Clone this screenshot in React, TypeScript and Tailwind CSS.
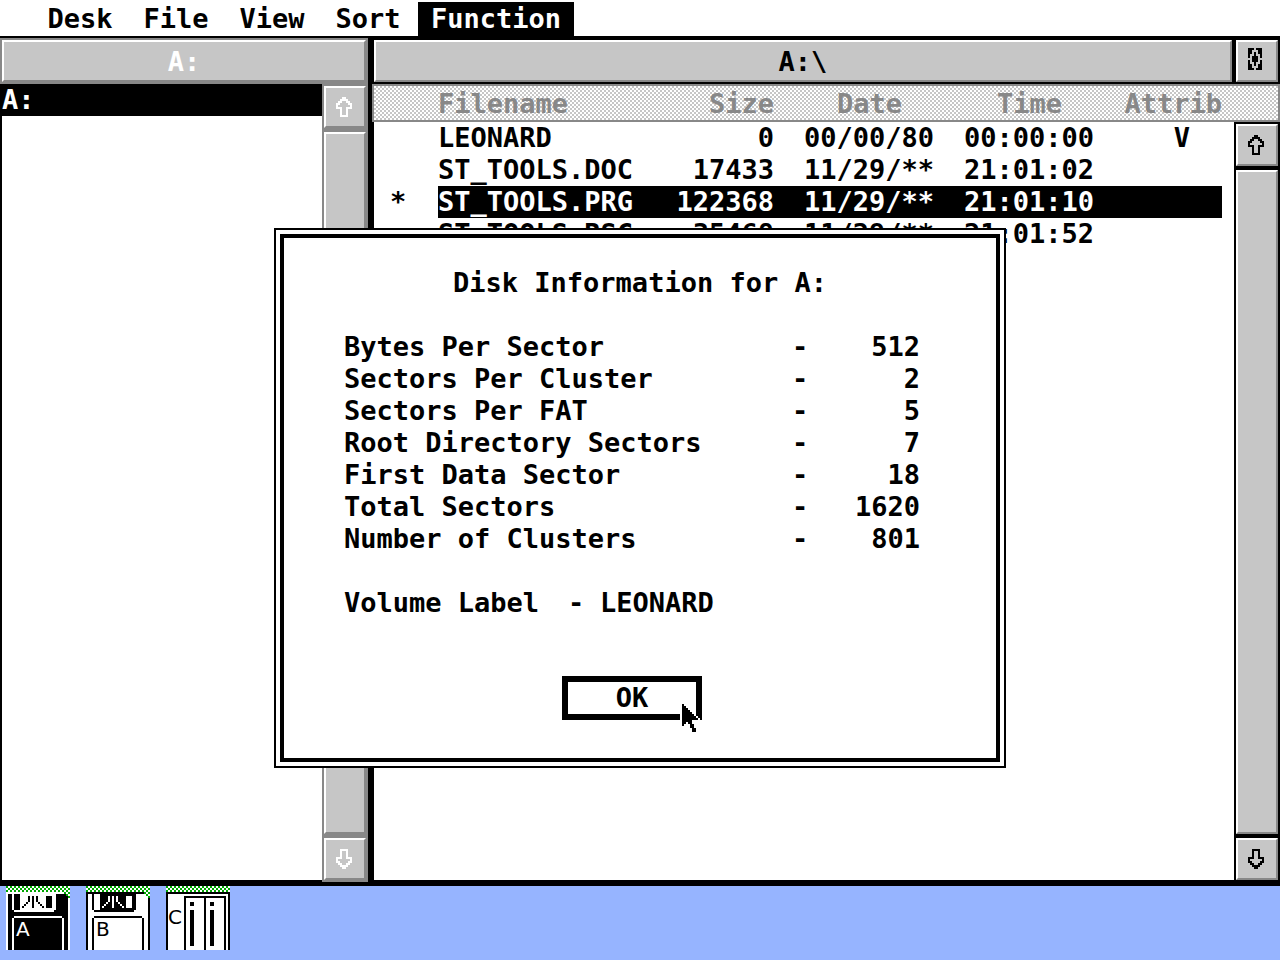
import React from "react";

const UP = [
  "...##...",
  "..####..",
  ".##..##.",
  "##....##",
  "#......#",
  "###..###",
  "..#..#..",
  "..#..#..",
  "..#..#..",
  "..####..",
];
const DOWN = [...UP].reverse();
const FULLER = [
  "###.###",
  "##...##",
  "##.#.##",
  "#..#..#",
  "#.###.#",
  "..###..",
  "#.###.#",
  "#..#..#",
  "##.#.##",
  "##...##",
  "###.###",
];
const POINTER = [
  "o#o........",
  "o##o.......",
  "o###o......",
  "o####o.....",
  "o#####o....",
  "o######o...",
  "o#######o..",
  "o########o.",
  "o#####oooo.",
  "o##o##o....",
  "o#o.o##o...",
  ".o..o##o...",
  ".....o##o..",
  ".....o##o..",
];

function Bitmap({ rows }: { rows: string[] }) {
  const w = rows[0].length;
  return (
    <svg width={w * 2} height={rows.length * 2} viewBox={`0 0 ${w} ${rows.length}`} shapeRendering="crispEdges" fill="currentColor" aria-hidden="true">
      {rows.flatMap((row, y) =>
        row.split("").map((c, x) =>
          c === "." ? null : <rect key={`${x}-${y}`} x={x} y={y} width="1" height="1" fill={c === "o" ? "#fff" : undefined} />
        )
      )}
    </svg>
  );
}

function ScrollBar({ active }: { active?: boolean }) {
  const edge = active ? "border-black bg-black" : "border-b-2 border-[#888888] bg-[#888888] text-white";
  const face = "bg-[#c6c6c6] border-2 border-t-white border-l-white border-r-[#888888] border-b-[#888888]";
  return (
    <div className={`flex flex-col gap-1 border-x-2 pt-0.5 ${edge}`}>
      <button aria-label="Scroll up" className={`flex h-[42px] shrink-0 items-center pl-2.5 ${face}`}>
        <Bitmap rows={UP} />
      </button>
      <div className={`flex-1 ${face}`} />
      <button aria-label="Scroll down" className={`flex h-[42px] shrink-0 items-center pl-2.5 ${face}`}>
        <Bitmap rows={DOWN} />
      </button>
    </div>
  );
}

function Hatch() {
  return (
    <>
      <defs>
        <pattern id="weave" width="2" height="2" patternUnits="userSpaceOnUse">
          <rect width="2" height="2" fill="#fff" />
          <rect width="1" height="1" fill="#00a600" />
          <rect x="1" y="1" width="1" height="1" fill="#00a600" />
        </pattern>
      </defs>
      <rect width="32" height="3" fill="url(#weave)" />
    </>
  );
}

function Letter({ x, y, fill, children }: { x: number; y: number; fill: string; children: string }) {
  return (
    <text x={x} y={y} fontSize="10" fontWeight="400" fontFamily="DejaVu Sans, sans-serif" fill={fill}>
      {children}
    </text>
  );
}

function Floppy({ letter, dark }: { letter: string; dark?: boolean }) {
  const ink = dark ? "#fff" : "#000";
  const paper = dark ? "#000" : "#fff";
  return (
    <svg width="64" height="64" viewBox="0 0 32 32" shapeRendering="crispEdges">
      <rect width="32" height="32" fill={paper} />
      <path fill={ink} d="M0 3h29v1H0zM0 4h1v28H0zM31 6h1v26h-1zM3 4h1v8H3zM4 12h20v1H4zM7 4h13v8H7zM20 4h5v1h-5zM23 4h2v8h-2zM20 11h3v1h-3zM4 15h24v1H4zM3 16h1v16H3zM28 16h1v16h-1z" />
      <path fill={paper} d="M13 5h1v6h-1zM11 5h1v3h-1zM10 8h1v1h-1zM9 9h1v1H9zM8 10h1v1H8zM15 5h1v3h-1zM16 8h1v1h-1zM17 9h1v1h-1zM18 10h1v1h-1z" />
      <Hatch />
      <path fill="url(#weave)" d="M29 3h3v3h-1v-1h-1v-1h-1z" />
      <Letter x={5} y={25} fill={ink}>{letter}</Letter>
    </svg>
  );
}

function HardDisk() {
  return (
    <svg width="64" height="64" viewBox="0 0 32 32" shapeRendering="crispEdges">
      <rect width="32" height="32" fill="#fff" />
      <path d="M0 3h32v1H0zM0 4h1v28H0zM31 4h1v28h-1zM9 5h21v1H9zM9 6h1v26H9zM19 6h1v26h-1zM29 6h1v26h-1zM12 8h2v2h-2zM22 8h2v2h-2zM12 12h2v18h-2zM22 12h2v18h-2z" />
      <Hatch />
      <Letter x={1} y={19} fill="#000">C</Letter>
    </svg>
  );
}

const FILES = [
  { name: "LEONARD", size: "0", date: "00/00/80", time: "00:00:00", attrib: "V" },
  { name: "ST_TOOLS.DOC", size: "17433", date: "11/29/**", time: "21:01:02", attrib: "" },
  { name: "ST_TOOLS.PRG", size: "122368", date: "11/29/**", time: "21:01:10", attrib: "", selected: true },
  { name: "ST_TOOLS.RSC", size: "35468", date: "11/29/**", time: "21:01:52", attrib: "" },
];

const INFO = [
  ["Bytes Per Sector", "512"],
  ["Sectors Per Cluster", "2"],
  ["Sectors Per FAT", "5"],
  ["Root Directory Sectors", "7"],
  ["First Data Sector", "18"],
  ["Total Sectors", "1620"],
  ["Number of Clusters", "801"],
];

function DiskDialog() {
  return (
    <div className="absolute inset-0 flex items-start justify-center pt-[228px]">
      <div role="dialog" aria-labelledby="dialog-title" className="w-[732px] border-2 border-black bg-white p-1">
        <div className="flex flex-col items-center border-4 border-black pt-[29px] pb-[38px]">
          <h2 id="dialog-title">Disk Information for A:</h2>
          <dl className="mt-8 w-[592px] pr-4">
            {INFO.map(([label, value]) => (
              <div key={label} className="flex">
                <dt className="flex w-[448px] justify-between">{label}</dt>
                <span>-</span>
                <dd className="flex-1 text-right">{value}</dd>
              </div>
            ))}
            <div className="mt-8 flex">
              <dt className="w-56">Volume Label</dt>
              <span className="w-8">-</span>
              <dd>LEONARD</dd>
            </div>
          </dl>
          <div className="relative mt-[57px] mr-4">
            <button className="h-11 w-[140px] border-[6px] border-black leading-8">OK</button>
            <div className="absolute top-[28px] left-[118px]">
              <Bitmap rows={POINTER} />
            </div>
          </div>
        </div>
      </div>
    </div>
  );
}

export default function App() {
  return (
    <div className="relative flex min-h-screen flex-col bg-[#96b4ff] font-['DejaVu_Sans_Mono',monospace] text-[27px] leading-8 font-bold whitespace-nowrap text-black">
      <nav className="flex h-[38px] items-end border-b-2 border-black bg-white pl-8">
        {["Desk", "File", "View", "Sort"].map((m) => (
          <button key={m} className="h-[34px] w-24">{m}</button>
        ))}
        <button className="ml-0.5 h-[34px] w-[156px] bg-black text-white">Function</button>
      </nav>

      <main className="flex flex-1">
        <section aria-label="Drives" className="flex w-[372px] flex-col border-r-4 border-b-4 border-black">
          <header className="border-x-2 border-t-2 border-b-2 border-[#888888]">
            <h1 className="h-[42px] border-2 border-t-white border-r-[#888888] border-b-[#888888] border-l-white bg-[#c6c6c6] pt-1 text-center font-bold text-white">A:</h1>
          </header>
          <div className="flex flex-1">
            <ul className="flex-1 border-b-2 border-l-2 border-black bg-white">
              <li className="bg-black text-white">A:</li>
            </ul>
            <div className="grid w-[46px]">
              <ScrollBar />
            </div>
          </div>
        </section>

        <section aria-label="Files" className="flex flex-1 flex-col border-b-4 border-black">
          <header className="flex gap-1 border-x-2 border-y-2 border-black bg-black">
            <h1 className="h-[42px] flex-1 border-2 border-t-white border-r-[#888888] border-b-[#888888] border-l-white bg-[#c6c6c6] pt-1 text-center font-bold">A:\</h1>
            <button aria-label="Full size" className="flex h-[42px] w-[42px] border-2 border-t-white border-r-[#888888] border-b-[#888888] border-l-white bg-[#c6c6c6] pt-1.5 pl-2.5">
              <Bitmap rows={FULLER} />
            </button>
          </header>
          <div className="grid flex-1 grid-cols-[1fr_46px] grid-rows-[38px_1fr] border-b-2 border-l-2 border-black bg-white">
            <table className="col-span-2 col-start-1 row-span-2 row-start-1 -ml-0.5 w-[calc(100%+2px)] table-fixed border-separate border-spacing-0 self-start">
              <colgroup>
                <col className="w-[66px]" />
                <col className="w-48" />
                <col className="w-36" />
                <col className="w-40" />
                <col className="w-40" />
                <col className="w-32" />
                <col />
              </colgroup>
              <thead>
                <tr className="h-[38px] bg-[repeating-conic-gradient(#c6c6c6_0_25%,#fff_0_50%)] bg-[length:4px_4px] text-[#888888] *:border-y-2 *:border-[#888888] *:px-0 *:pt-0.5 *:pb-0">
                  <td className="border-l-2" />
                  <th className="text-left">Filename</th>
                  <th className="text-right">Size</th>
                  <th><span className="block pr-8 text-right">Date</span></th>
                  <th><span className="block pr-8 text-right">Time</span></th>
                  <th className="text-right">Attrib</th>
                  <td className="border-r-2" />
                </tr>
              </thead>
              <tbody>
                {FILES.map((f) => (
                  <tr key={f.name} className={f.selected ? "*:bg-black *:p-0 *:text-white" : "*:p-0"}>
                    <td className="bg-transparent! text-black!">
                      <span className="block pl-[18px]">{f.selected ? "*" : ""}</span>
                    </td>
                    <td>{f.name}</td>
                    <td className="text-right">{f.size}</td>
                    <td className="text-right">{f.date}</td>
                    <td className="text-right">{f.time}</td>
                    <td><span className="block pr-8 text-right">{f.attrib}</span></td>
                    <td className="bg-white!" />
                  </tr>
                ))}
              </tbody>
            </table>
            <div className="relative col-start-2 row-start-2 grid">
              <ScrollBar active />
            </div>
          </div>
        </section>
      </main>

      <footer className="flex gap-4 pb-2.5 pl-1.5">
        <button aria-label="Drive A"><Floppy letter="A" dark /></button>
        <button aria-label="Drive B"><Floppy letter="B" /></button>
        <button aria-label="Drive C"><HardDisk /></button>
      </footer>

      <DiskDialog />
    </div>
  );
}
